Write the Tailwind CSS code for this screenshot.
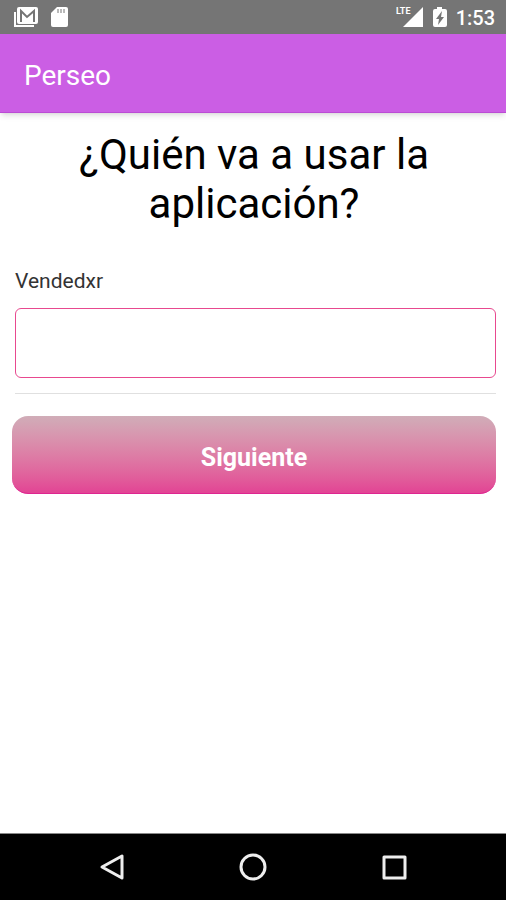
<!DOCTYPE html>
<html lang="es">
<head>
  <meta charset="UTF-8">
  <meta name="viewport" content="width=device-width, initial-scale=1.0">
  <title>Perseo</title>
  <script src="https://cdn.jsdelivr.net/npm/@tailwindcss/browser@4"></script>
</head>
<body class="bg-white text-black font-[Roboto,sans-serif]">
<div class="min-h-screen flex flex-col">

  <!-- Status Bar -->
  <div class="h-[34px] shrink-0 bg-[#757575] text-white flex items-center justify-between pl-3 pr-[11px]">
    <div class="flex items-center gap-2">
      <svg class="w-7 h-6" viewBox="0 0 28 24" fill="none">
        <path d="M3 7v14h19" stroke="#fff" stroke-width="2"/>
        <rect x="5" y="2" width="21" height="17" rx="2" fill="#fff"/>
        <path d="M9 17V6l6 6 7-6v11" stroke="#757575" stroke-width="2"/>
      </svg>
      <svg class="w-6 h-6" viewBox="0 0 24 24">
        <path d="M9 2h9a2 2 0 0 1 2 2v16a2 2 0 0 1-2 2H5a2 2 0 0 1-2-2V8z" fill="#fff"/>
        <path d="M10 4v4M13 4v4M16 4v4" stroke="#757575" stroke-width="1"/>
      </svg>
    </div>
    <div class="flex items-center gap-2">
      <svg class="w-7 h-6" viewBox="0 0 28 24">
        <path d="M27 2v20H7z" fill="#fff"/>
        <path d="M0 0h15v11H0z" fill="#757575"/>
        <text x="0" y="9" fill="#fff" class="text-[9px] font-bold font-[Roboto,sans-serif]">LTE</text>
      </svg>
      <svg class="w-4 h-6" viewBox="0 0 16 24">
        <path d="M5 2h5v2h3a2 2 0 0 1 2 2v14a2 2 0 0 1-2 2H3a2 2 0 0 1-2-2V6a2 2 0 0 1 2-2h2z" fill="#fff"/>
        <path d="M10 6l-6 8h3l-1 6 6-8H9z" fill="#757575"/>
      </svg>
      <span class="text-xl leading-6 pt-0.5 font-medium">1:53</span>
    </div>
  </div>

  <!-- App Bar -->
  <header class="h-[79px] shrink-0 bg-[#cb5ee4] border-b border-[#bb4bd5] shadow-md flex items-center px-6">
    <h1 class="text-[28px] leading-8 pt-1.5 text-white">Perseo</h1>
  </header>

  <!-- Form -->
  <main class="grow pl-3 pr-[10px] pt-[17px]">
    <h2 class="text-[42px] leading-[49px] text-center px-10">¿Quién va a usar la aplicación?</h2>
    <form>
      <div class="ml-[3px] mt-[41px] pb-[15px] border-b border-[#e0e0e0]">
        <label for="vendedor" class="block text-[21px] leading-6 text-[#333]">Vendedxr</label>
        <input id="vendedor" type="text" class="block w-full h-[70px] mt-[15px] px-4 text-xl bg-white border border-[#e8498f] rounded-md">
      </div>
      <button type="button" class="block w-full h-[78px] mt-[22px] rounded-2xl border-b border-[#de2590] bg-linear-to-b from-[#d0adb8] to-[#e24394] text-white text-[25px] font-bold pt-1.5">Siguiente</button>
    </form>
  </main>

  <!-- Navigation Bar -->
  <nav class="h-[67px] shrink-0 bg-black border-t border-[#888]">
    <div class="w-5/6 h-full mx-auto grid grid-cols-3">
      <button type="button" aria-label="Atrás" class="flex items-center justify-center">
        <svg class="w-7 h-7" viewBox="0 0 28 28" fill="none" stroke="#eee" stroke-width="3" stroke-linejoin="round"><path d="M4 14L24 3v22z"/></svg>
      </button>
      <button type="button" aria-label="Inicio" class="flex items-center justify-center">
        <svg class="w-7 h-7" viewBox="0 0 28 28" fill="none" stroke="#eee" stroke-width="3"><circle cx="14" cy="14" r="12"/></svg>
      </button>
      <button type="button" aria-label="Recientes" class="flex items-center justify-center">
        <svg class="w-7 h-7" viewBox="0 0 28 28" fill="none" stroke="#eee" stroke-width="3" stroke-linejoin="round"><rect x="4" y="4" width="21" height="21"/></svg>
      </button>
    </div>
  </nav>
</div>
</body>
</html>
